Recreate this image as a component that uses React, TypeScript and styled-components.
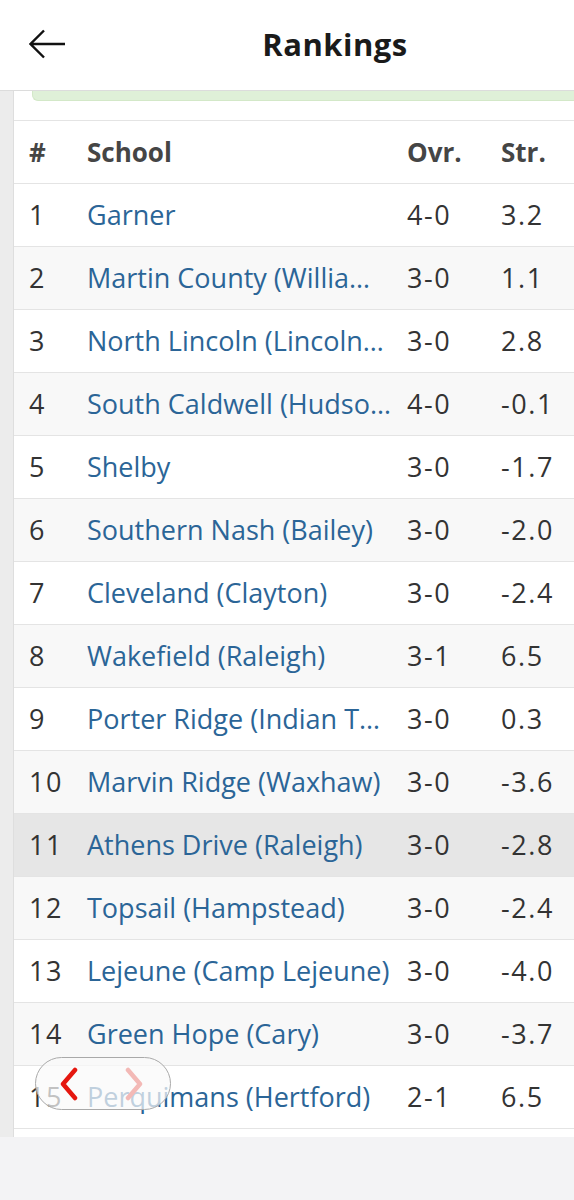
import React from "react";
import styled, { createGlobalStyle } from "styled-components";

const Global = createGlobalStyle`
  html, body { margin: 0; padding: 0; background: #f3f3f5; }
  body { font-family: "Open Sans", "Noto Sans", sans-serif; -webkit-font-smoothing: antialiased; }
  * { box-sizing: border-box; }
`;

const Page = styled.div`
  width: 574px;
  min-height: 1200px;
  background: #f3f3f5;
`;

const TopBar = styled.header`
  height: 91px;
  background: #fff;
  border-bottom: 1px solid #dcdcdc;
  display: flex;
  align-items: center;
`;

const BackButton = styled.button`
  width: 96px;
  height: 90px;
  border: 0;
  background: transparent;
  padding: 0 0 0 29px;
  display: flex;
  align-items: center;
  cursor: pointer;
`;

const Title = styled.h1`
  flex: 1;
  margin: 0;
  text-align: center;
  font-family: "Open Sans", "Noto Sans", sans-serif;
  font-weight: 700;
  font-size: 31px;
  letter-spacing: 0.5px;
  color: #1a1a1a;
  padding-bottom: 2px;
`;

const Body = styled.div`
  display: flex;
  align-items: stretch;
`;

const Gutter = styled.div`
  width: 14px;
  background: #ececec;
  border-right: 1px solid #dedede;
`;

const Panel = styled.main`
  flex: 1;
  background: #fff;
  padding-bottom: 8px;
`;

const AlertTail = styled.div`
  margin-left: 18px;
  height: 10px;
  background: #dff0d8;
  border: 1px solid #d3e8c8;
  border-top: 0;
  border-right: 0;
  border-bottom-left-radius: 6px;
`;

const Spacer = styled.div`
  height: 19px;
`;

const Table = styled.div`
  border-top: 1px solid #e4e4e4;
`;

const Row = styled.div<{ $bg: string }>`
  display: grid;
  grid-template-columns: 65px 320px 94px 1fr;
  height: 63px;
  align-items: center;
  background: ${(p) => p.$bg};
  border-bottom: 1px solid #e4e4e4;
`;

const Cell = styled.div<{ $first?: boolean; $head?: boolean; $link?: boolean }>`
  padding: 0 ${(p) => (p.$link ? "8px" : "4px")} 0 ${(p) => (p.$first ? "15px" : "8px")};
  font-size: ${(p) => (p.$head ? "26px" : "27px")};
  font-weight: ${(p) => (p.$head ? 700 : 400)};
  letter-spacing: ${(p) => (p.$head || p.$link ? "0" : "1.6px")};
  color: ${(p) => (p.$head ? "#454545" : p.$link ? "#2b6597" : "#333")};
  white-space: nowrap;
  overflow: hidden;
  text-overflow: ellipsis;
  line-height: 36px;
`;

const PagerPill = styled.div`
  position: fixed;
  left: 35px;
  bottom: 90px;
  width: 136px;
  height: 53px;
  border-radius: 27px;
  border: 1.5px solid #a9a9a9;
  background: rgba(250, 250, 250, 0.72);
  display: flex;
  align-items: center;
  justify-content: space-between;
  padding: 0 24px 0 21px;
`;

const PagerButton = styled.button<{ $disabled?: boolean }>`
  border: 0;
  background: transparent;
  padding: 0;
  width: 24px;
  height: 36px;
  display: flex;
  align-items: center;
  justify-content: center;
  color: ${(p) => (p.$disabled ? "#f3b9b6" : "#e5170f")};
`;

const rows: [string, string, string, string][] = [
  ["1", "Garner", "4-0", "3.2"],
  ["2", "Martin County (Williamston)", "3-0", "1.1"],
  ["3", "North Lincoln (Lincolnton)", "3-0", "2.8"],
  ["4", "South Caldwell (Hudson)", "4-0", "-0.1"],
  ["5", "Shelby", "3-0", "-1.7"],
  ["6", "Southern Nash (Bailey)", "3-0", "-2.0"],
  ["7", "Cleveland (Clayton)", "3-0", "-2.4"],
  ["8", "Wakefield (Raleigh)", "3-1", "6.5"],
  ["9", "Porter Ridge (Indian Trail)", "3-0", "0.3"],
  ["10", "Marvin Ridge (Waxhaw)", "3-0", "-3.6"],
  ["11", "Athens Drive (Raleigh)", "3-0", "-2.8"],
  ["12", "Topsail (Hampstead)", "3-0", "-2.4"],
  ["13", "Lejeune (Camp Lejeune)", "3-0", "-4.0"],
  ["14", "Green Hope (Cary)", "3-0", "-3.7"],
  ["15", "Perquimans (Hertford)", "2-1", "6.5"],
];

export default function App() {
  return (
    <Page>
      <Global />
      <TopBar>
        <BackButton aria-label="Back">
          <svg width="38" height="32" viewBox="0 0 38 32" fill="none">
            <path d="M1.5 15H36M15 1.5L1.5 15L15 28.5" stroke="#111" strokeWidth="2.4" strokeLinecap="butt" strokeLinejoin="miter" />
          </svg>
        </BackButton>
        <Title>Rankings</Title>
      </TopBar>
      <Body>
        <Gutter />
        <Panel>
          <AlertTail />
          <Spacer />
          <Table>
            <Row $bg="#fff">
              <Cell $first $head>#</Cell>
              <Cell $head>School</Cell>
              <Cell $head>Ovr.</Cell>
              <Cell $head>Str.</Cell>
            </Row>
            {rows.map(([rank, school, ovr, str], i) => (
              <Row key={rank} $bg={rank === "11" ? "#e6e6e6" : i % 2 === 1 ? "#f8f8f8" : "#fff"}>
                <Cell $first>{rank}</Cell>
                <Cell $link>{school}</Cell>
                <Cell>{ovr}</Cell>
                <Cell>{str}</Cell>
              </Row>
            ))}
          </Table>
        </Panel>
      </Body>
      <PagerPill>
        <PagerButton aria-label="Previous">
          <svg width="20" height="34" viewBox="0 0 20 34" fill="none">
            <path d="M16 3L4 17L16 31" stroke="currentColor" strokeWidth="4.5" strokeLinecap="round" strokeLinejoin="round" />
          </svg>
        </PagerButton>
        <PagerButton $disabled aria-label="Next">
          <svg width="20" height="34" viewBox="0 0 20 34" fill="none">
            <path d="M4 3L16 17L4 31" stroke="currentColor" strokeWidth="4.5" strokeLinecap="round" strokeLinejoin="round" />
          </svg>
        </PagerButton>
      </PagerPill>
    </Page>
  );
}
